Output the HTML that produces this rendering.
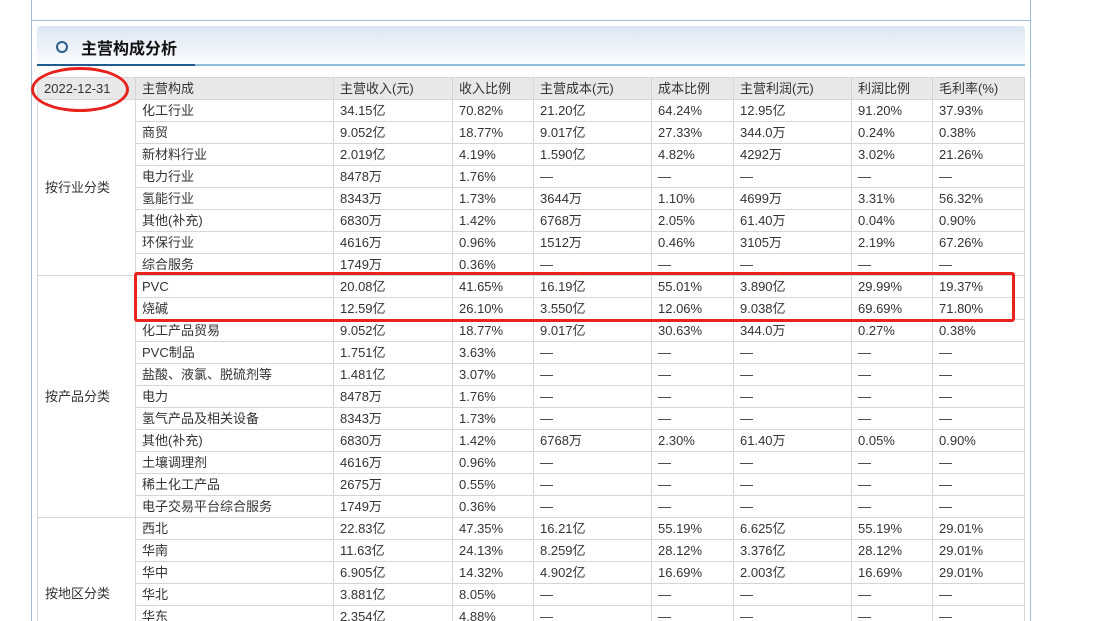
<!DOCTYPE html>
<html style="width:1111px;height:621px;overflow:hidden"><head><meta charset="utf-8"><style>
body{margin:0;width:1111px;height:621px;overflow:hidden;background:#fff;font-family:"Liberation Sans","Noto Sans CJK SC",sans-serif;position:relative}
.outer{position:absolute;left:31px;top:0;width:998px;height:621px;border-left:1px solid #9cbfd9;border-right:1px solid #9cbfd9}
.topline{position:absolute;left:31px;top:20px;width:999px;height:1px;background:#9cbfd9}
.hdr{position:absolute;left:37px;top:26px;width:988px;height:38px;background:linear-gradient(#dbe6f3,#fbfcfe);border-radius:4px 4px 0 0}
.hb1{position:absolute;left:37px;top:64px;width:158px;height:2px;background:#1f5b8c}
.hb2{position:absolute;left:195px;top:64px;width:830px;height:2px;background:#8fbcd9}
.circ{position:absolute;left:56px;top:41px;width:8px;height:8px;border:2px solid #2a5f8a;border-radius:50%}
.title{position:absolute;left:81px;top:35px;font-size:16px;font-weight:bold;color:#111}
.wrap{position:absolute;left:0;top:0;width:1111px;height:621px;overflow:hidden}
table{position:absolute;left:37px;top:77px;border-collapse:collapse;font-size:13px;color:#333;font-family:"Liberation Sans","Noto Sans CJK SC",sans-serif}
td{border:1px solid #d6d6d6;height:21px;padding:0 0 0 6px;line-height:21px;white-space:nowrap;overflow:hidden}
tr.h td{background:#e8e8e8}
td.g{vertical-align:middle;padding-left:7px}
.rb{position:absolute;left:134px;top:272px;width:875px;height:44px;border:3px solid #e8221c;border-radius:3px}
.el{position:absolute;left:31px;top:67px;width:92px;height:39px;border:3px solid #e8221c;border-radius:50%}
</style></head><body>
<div class="wrap">
<div class="outer"></div><div class="topline"></div>
<div class="hdr"></div><div class="hb1"></div><div class="hb2"></div>
<div class="circ"></div><div class="title">主营构成分析</div>
<table>
<colgroup><col style="width:98px"><col style="width:198px"><col style="width:119px"><col style="width:81px"><col style="width:118px"><col style="width:82px"><col style="width:118px"><col style="width:81px"><col style="width:92px"></colgroup>
<tr class="h"><td>2022-12-31</td><td>主营构成</td><td>主营收入(元)</td><td>收入比例</td><td>主营成本(元)</td><td>成本比例</td><td>主营利润(元)</td><td>利润比例</td><td>毛利率(%)</td></tr>
<tr><td class="g" rowspan="8">按行业分类</td><td>化工行业</td><td>34.15亿</td><td>70.82%</td><td>21.20亿</td><td>64.24%</td><td>12.95亿</td><td>91.20%</td><td>37.93%</td></tr>
<tr><td>商贸</td><td>9.052亿</td><td>18.77%</td><td>9.017亿</td><td>27.33%</td><td>344.0万</td><td>0.24%</td><td>0.38%</td></tr>
<tr><td>新材料行业</td><td>2.019亿</td><td>4.19%</td><td>1.590亿</td><td>4.82%</td><td>4292万</td><td>3.02%</td><td>21.26%</td></tr>
<tr><td>电力行业</td><td>8478万</td><td>1.76%</td><td>—</td><td>—</td><td>—</td><td>—</td><td>—</td></tr>
<tr><td>氢能行业</td><td>8343万</td><td>1.73%</td><td>3644万</td><td>1.10%</td><td>4699万</td><td>3.31%</td><td>56.32%</td></tr>
<tr><td>其他(补充)</td><td>6830万</td><td>1.42%</td><td>6768万</td><td>2.05%</td><td>61.40万</td><td>0.04%</td><td>0.90%</td></tr>
<tr><td>环保行业</td><td>4616万</td><td>0.96%</td><td>1512万</td><td>0.46%</td><td>3105万</td><td>2.19%</td><td>67.26%</td></tr>
<tr><td>综合服务</td><td>1749万</td><td>0.36%</td><td>—</td><td>—</td><td>—</td><td>—</td><td>—</td></tr>
<tr><td class="g" rowspan="11">按产品分类</td><td>PVC</td><td>20.08亿</td><td>41.65%</td><td>16.19亿</td><td>55.01%</td><td>3.890亿</td><td>29.99%</td><td>19.37%</td></tr>
<tr><td>烧碱</td><td>12.59亿</td><td>26.10%</td><td>3.550亿</td><td>12.06%</td><td>9.038亿</td><td>69.69%</td><td>71.80%</td></tr>
<tr><td>化工产品贸易</td><td>9.052亿</td><td>18.77%</td><td>9.017亿</td><td>30.63%</td><td>344.0万</td><td>0.27%</td><td>0.38%</td></tr>
<tr><td>PVC制品</td><td>1.751亿</td><td>3.63%</td><td>—</td><td>—</td><td>—</td><td>—</td><td>—</td></tr>
<tr><td>盐酸、液氯、脱硫剂等</td><td>1.481亿</td><td>3.07%</td><td>—</td><td>—</td><td>—</td><td>—</td><td>—</td></tr>
<tr><td>电力</td><td>8478万</td><td>1.76%</td><td>—</td><td>—</td><td>—</td><td>—</td><td>—</td></tr>
<tr><td>氢气产品及相关设备</td><td>8343万</td><td>1.73%</td><td>—</td><td>—</td><td>—</td><td>—</td><td>—</td></tr>
<tr><td>其他(补充)</td><td>6830万</td><td>1.42%</td><td>6768万</td><td>2.30%</td><td>61.40万</td><td>0.05%</td><td>0.90%</td></tr>
<tr><td>土壤调理剂</td><td>4616万</td><td>0.96%</td><td>—</td><td>—</td><td>—</td><td>—</td><td>—</td></tr>
<tr><td>稀土化工产品</td><td>2675万</td><td>0.55%</td><td>—</td><td>—</td><td>—</td><td>—</td><td>—</td></tr>
<tr><td>电子交易平台综合服务</td><td>1749万</td><td>0.36%</td><td>—</td><td>—</td><td>—</td><td>—</td><td>—</td></tr>
<tr><td class="g" rowspan="6" style="vertical-align:top;padding-top:65px">按地区分类</td><td>西北</td><td>22.83亿</td><td>47.35%</td><td>16.21亿</td><td>55.19%</td><td>6.625亿</td><td>55.19%</td><td>29.01%</td></tr>
<tr><td>华南</td><td>11.63亿</td><td>24.13%</td><td>8.259亿</td><td>28.12%</td><td>3.376亿</td><td>28.12%</td><td>29.01%</td></tr>
<tr><td>华中</td><td>6.905亿</td><td>14.32%</td><td>4.902亿</td><td>16.69%</td><td>2.003亿</td><td>16.69%</td><td>29.01%</td></tr>
<tr><td>华北</td><td>3.881亿</td><td>8.05%</td><td>—</td><td>—</td><td>—</td><td>—</td><td>—</td></tr>
<tr><td>华东</td><td>2.354亿</td><td>4.88%</td><td>—</td><td>—</td><td>—</td><td>—</td><td>—</td></tr>
<tr><td>其他</td><td>1.000亿</td><td>1.00%</td><td>—</td><td>—</td><td>—</td><td>—</td><td>—</td></tr>
</table>
<div class="rb"></div><div class="el"></div>
</div>
</body></html>
